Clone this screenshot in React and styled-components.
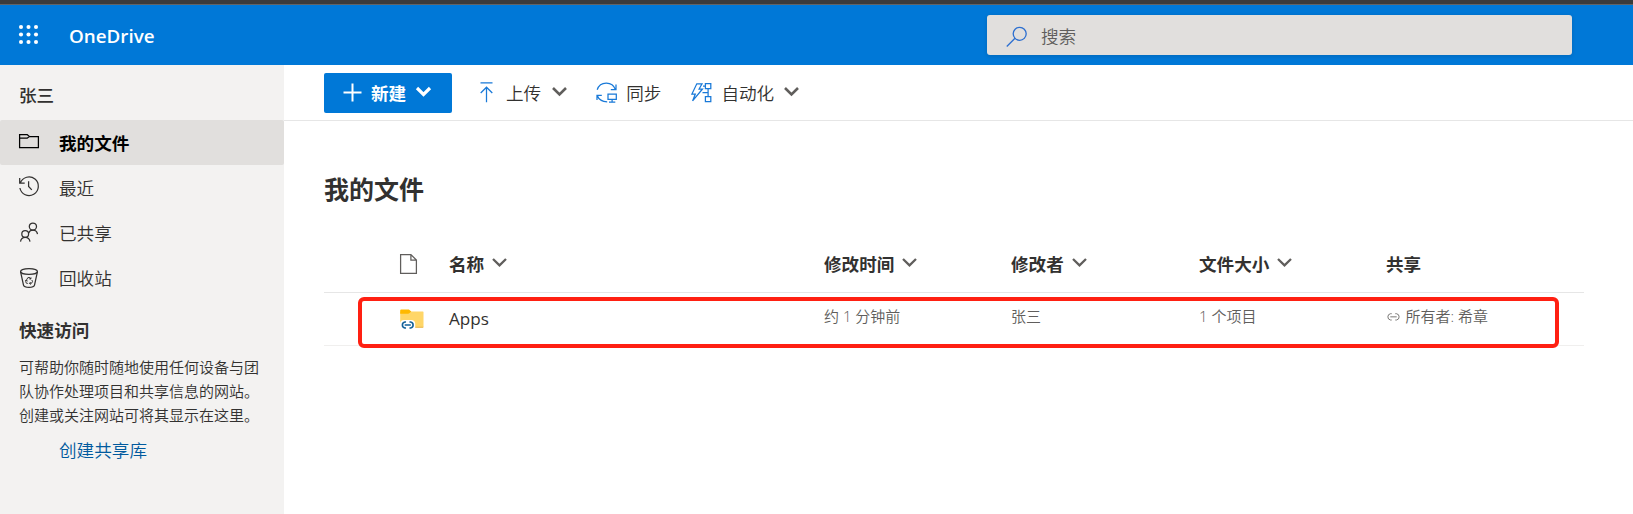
import React from "react";
import styled, { createGlobalStyle, css } from "styled-components";

const GlobalStyle = createGlobalStyle`
  * { box-sizing: border-box; }
  body {
    margin: 0;
    background: #fff;
    color: #323130;
    font-family: "Open Sans", "Noto Sans CJK SC", sans-serif;
    font-size: 17.6px;
    overflow: hidden;
  }
  svg { display: block; flex: none; overflow: visible; }
`;

const Page = styled.div`
  height: 514px;
  display: flex;
  flex-direction: column;
`;

const BrowserEdge = styled.div`
  height: 5px;
  flex: none;
  background: #3b3b3b;
  border-bottom: 1px solid #626466;
`;

const Header = styled.header`
  height: 60px;
  flex: none;
  display: flex;
  align-items: center;
  justify-content: space-between;
  padding: 0 61px 0 19px;
  background: #0078d7;
`;

const Brand = styled.div`
  display: flex;
  align-items: center;
  gap: 31px;
  color: #fff;
  font-size: 18.8px;
  font-weight: 600;
  line-height: 26px;
`;

const BrandName = styled.span`
  padding-top: 2px;
`;

const SearchBox = styled.div`
  width: 585px;
  height: 40px;
  display: flex;
  align-items: center;
  gap: 13px;
  padding-left: 19px;
  border-radius: 3px;
  background: #e1dfdd;
  color: #605e5c;
  font-weight: 350;
  box-shadow: 0 1px 4px rgba(0, 0, 0, 0.14);
`;

const Body = styled.div`
  flex: 1;
  min-height: 0;
  display: flex;
`;

const Sidebar = styled.aside`
  width: 284px;
  flex: none;
  background: #f3f2f1;
`;

const SideHeading = styled.h2`
  margin: 0;
  padding-left: 19px;
  height: ${(p) => p.$height}px;
  line-height: ${(p) => p.$line}px;
  font-size: 17.6px;
  font-weight: ${(p) => p.$weight || 700};
`;

const NavItem = styled.a`
  height: 45px;
  display: flex;
  align-items: center;
  gap: 20px;
  padding-left: 19px;
  font-weight: 350;
  line-height: 24px;
  svg { margin-bottom: ${(p) => p.$lift}px; }
  ${(p) =>
    p.$active &&
    css`
      background: #e1dfdd;
      border-radius: 2px;
      color: #000;
      font-weight: 700;
    `}
`;

const SideNote = styled.p`
  margin: 0;
  padding: 0 19px;
  width: 284px;
  font-size: 15px;
  font-weight: 350;
  line-height: 24px;
  white-space: nowrap;
`;

const SideLink = styled.a`
  display: block;
  padding: 11px 0 0 59px;
  color: #005a9e;
  font-weight: 350;
  line-height: 24px;
`;

const Main = styled.main`
  flex: 1;
  min-width: 0;
`;

const CommandBar = styled.div`
  height: 56px;
  display: flex;
  align-items: center;
  padding: 0 0 0 40px;
  border-bottom: 1px solid #e6e6e6;
`;

const PrimaryButton = styled.button`
  width: 128px;
  height: 40px;
  display: flex;
  align-items: center;
  gap: 9px;
  padding: 0 0 0 19px;
  border: 0;
  border-radius: 2px;
  background: #0078d7;
  color: #fff;
  font: inherit;
  font-weight: 700;
`;

const Command = styled.button`
  display: flex;
  align-items: center;
  gap: ${(p) => p.$gap}px;
  height: 40px;
  margin-left: ${(p) => p.$before}px;
  padding: 0;
  border: 0;
  background: none;
  color: inherit;
  font: inherit;
  font-weight: 350;
  white-space: nowrap;
`;

const PageTitle = styled.h1`
  margin: 0;
  padding: 48px 0 0 40px;
  font-size: 25px;
  font-weight: 700;
  line-height: 40px;
`;

const FileList = styled.div`
  position: relative;
  width: 1260px;
  margin: 29px 0 0 40px;
`;

const Row = styled.div`
  display: grid;
  grid-template-columns: 125px 375px 187px 188px 187px 1fr;
  align-items: center;
`;

const ListHeader = styled(Row)`
  height: 55px;
  padding-bottom: 3px;
  border-bottom: 1px solid #e6e6e6;
  font-weight: 700;
`;

const FileRow = styled(Row)`
  height: 53px;
  border-bottom: 1px solid #f0efee;
  color: #605e5c;
  font-size: 15px;
  font-weight: 350;
`;

const Cell = styled.div`
  display: flex;
  align-items: center;
  gap: ${(p) => p.$gap || 8}px;
  white-space: nowrap;
`;

const IconCell = styled.div`
  padding-left: 76px;
`;

const MetaCell = styled(Cell)`
  padding-bottom: 7px;
`;

const FileName = styled(Cell)`
  padding-bottom: 2px;
  color: #323130;
  font-size: 17.1px;
  font-weight: 400;
`;

const Highlight = styled.div`
  position: absolute;
  left: 34px;
  top: 59px;
  width: 1201px;
  height: 51px;
  border: 4px solid #ff2012;
  border-radius: 6px;
`;

const ChevronSvg = styled.svg`
  margin-bottom: ${(p) => p.$lift}px;
`;

const Chevron = ({ color = "#605e5c", width = 2.3, lift = 2 }) => (
  <ChevronSvg $lift={lift} width="15" height="9" viewBox="0 0 15 9" fill="none" stroke={color} strokeWidth={width}>
    <path d="M1 1l6.5 6.4L14 1" />
  </ChevronSvg>
);

const Waffle = () => (
  <svg width="19" height="19" viewBox="0 0 19 19" fill="#fff">
    {[1, 8.5, 16].map((y) => [2, 9.5, 17].map((x) => <circle key={`${x}-${y}`} cx={x} cy={y} r="2.05" />))}
  </svg>
);

const SearchIcon = () => (
  <svg width="22" height="20" viewBox="0 0 22 20" fill="none" stroke="#2c6fd0" strokeWidth="1.3">
    <circle cx="13.7" cy="8.8" r="6.5" />
    <path d="M9 13.3L.8 21.5" />
  </svg>
);

const Line = ({ w = 20, h = 20, color = "currentColor", stroke = 1.25, children }) => (
  <svg width={w} height={h} viewBox={`0 0 ${w} ${h}`} fill="none" stroke={color} strokeWidth={stroke}>
    {children}
  </svg>
);

const FolderOutline = () => (
  <Line h={16}>
    <path d="M.6 14.5V1.5H8.2l2.1 2h9.1v11H.6zM.6 5.2H8.2l2.1-1.7" />
  </Line>
);

const History = () => (
  <Line>
    <path d="M1.3 7A9.3 9.3 0 1 1 .9 12M.7 2v5.1h5M9.6 5.2v5.3l3.2 3.4" />
  </Line>
);

const People = () => (
  <Line>
    <circle cx="13.9" cy="4.6" r="3.6" />
    <circle cx="6.2" cy="12" r="3.4" />
    <path d="M1.5 19.6c.4-2.5 2.2-4.2 4.7-4.2s4.4 1.7 4.8 4.2M9.7 10.9c.7-1.7 2.1-2.7 4.2-2.7 2.6 0 4.2 1.6 4.6 4" />
  </Line>
);

const RecycleBin = () => (
  <Line>
    <ellipse cx="10" cy="3.5" rx="8.4" ry="2.9" />
    <path d="M1.6 3.8l2.9 13.3c.4 1.6 2.1 2.3 5.5 2.3s5.1-.7 5.5-2.3L18.4 3.8" />
    <path d="M7.6 11.8l1.3-2.2h2l.9 1.4M12.9 12l.6 1.6-1 1.7h-1.9M8.8 15.4l-1.3-.1-.8-1.5.7-1.6M12 9.4l-.2 1.7-1.6-.3M11.6 14.1l-1.2 1.3 1.2 1.2M6.2 12.6l1.4-.6.7 1.4" strokeWidth="1" />
  </Line>
);

const Plus = () => (
  <Line w={19} h={19} color="#fff" stroke={2}>
    <path d="M9.5 .5v18M.5 9.5h18" />
  </Line>
);

const Upload = () => (
  <Line w={13} h={21} color="#1979d8">
    <path d="M.5 .9h12M6.5 20.2V5.2M.7 11L6.5 5.2l5.8 5.8" />
  </Line>
);

const Sync = () => (
  <Line w={21} h={21} color="#1979d8">
    <path d="M1.2 7.7a9.6 9.6 0 0 1 18.2-.2M20 2.6v5.1h-5.2M1 18v-4.7h4.8M1.2 13.6c1.5 3.8 5 6.2 10 6.2" />
    <path d="M12 12h8.3v5.3H12zM16.1 17.3v2.5M13 20h6.3" />
  </Line>
);

const Automate = () => (
  <Line w={21} h={20} color="#1979d8">
    <path d="M5.8.8h5.2L8.1 6h3.4L1.6 17.9 4.3 11H.9z" />
    <path d="M14.4.7h5.4v5h-5.4zM14.4 13.6h5.4v5h-5.4zM17.1 5.7v7.9M14.4 3.2H12M17.1 9.6h-5.6" />
  </Line>
);

const FileIcon = () => (
  <Line w={17} h={20} color="#605e5c">
    <path d="M.6.6h10.3l5.5 5.5v13.3H.6zM10.9.6v5.5h5.5" />
  </Line>
);

const LinkShape = () => <path d="M5.2 7H4a3.2 3.2 0 0 1 0-6.3h1.2M8.8.7H10A3.2 3.2 0 0 1 10 7H8.8M3.8 3.85h6.4" />;

const SharedFolder = () => (
  <svg width="24" height="20" viewBox="0 0 24 20">
    <path d="M.2 2.4h22.7c.4 0 .6.3.6.7v14.5c0 .6-.4 1-1 1H1.2c-.5 0-1-.4-1-.9z" fill="#ffd668" />
    <path d="M15 17.7h8.5c0 .6-.4 1-1 1H15z" fill="#e9b64e" />
    <path d="M.2 1.3C.2.8.6.5 1.1.5h7.2c.5 0 .8.1 1.2.4l1.8 1.6-2 1.8c-.3.3-.7.4-1.1.4h-8z" fill="#ffb900" />
    <path d="M0 14.8c0-2 1.7-3.7 3.7-3.7h7.8c2.1 0 3.7 1.7 3.7 3.7v5.1H0z" fill="#fff" />
    <g transform="translate(1.1 12.4) scale(.95)" fill="none" stroke="#126199" strokeWidth="1.7">
      <LinkShape />
    </g>
  </svg>
);

const ShareLink = () => (
  <svg width="15" height="8" viewBox="0 -1 14 8" fill="none" stroke="#797775" strokeWidth="1">
    <LinkShape />
  </svg>
);

const navItems = [
  { label: "我的文件", Icon: FolderOutline, active: true, lift: 3 },
  { label: "最近", Icon: History, lift: 4 },
  { label: "已共享", Icon: People, lift: 1 },
  { label: "回收站", Icon: RecycleBin, lift: 0 },
];

const columns = ["名称", "修改时间", "修改者", "文件大小"];

export default function App() {
  return (
    <Page>
      <GlobalStyle />
      <BrowserEdge />
      <Header>
        <Brand>
          <Waffle />
          <BrandName>OneDrive</BrandName>
        </Brand>
        <SearchBox>
          <SearchIcon />
          搜索
        </SearchBox>
      </Header>
      <Body>
        <Sidebar>
          <SideHeading $height={55} $line={61} $weight={500}>张三</SideHeading>
          <nav>
            {navItems.map(({ label, Icon, active, lift }) => (
              <NavItem key={label} $active={active} $lift={lift}>
                <Icon />
                {label}
              </NavItem>
            ))}
          </nav>
          <SideHeading $height={55} $line={61}>快速访问</SideHeading>
          <SideNote>
            可帮助你随时随地使用任何设备与团
            <br />
            队协作处理项目和共享信息的网站。
            <br />
            创建或关注网站可将其显示在这里。
          </SideNote>
          <SideLink>创建共享库</SideLink>
        </Sidebar>
        <Main>
          <CommandBar>
            <PrimaryButton>
              <Plus />
              <Cell $gap={10}>新建 <Chevron color="#fff" width={3.2} /></Cell>
            </PrimaryButton>
            <Command $before={28} $gap={13}>
              <Upload />
              <Cell $gap={11}>上传 <Chevron width={2.6} /></Cell>
            </Command>
            <Command $before={29} $gap={9}>
              <Sync />
              同步
            </Command>
            <Command $before={30} $gap={9}>
              <Automate />
              <Cell $gap={10}>自动化 <Chevron width={2.6} /></Cell>
            </Command>
          </CommandBar>
          <PageTitle>我的文件</PageTitle>
          <FileList>
            <ListHeader>
              <IconCell>
                <FileIcon />
              </IconCell>
              {columns.map((label) => (
                <Cell key={label}>
                  {label}
                  <Chevron />
                </Cell>
              ))}
              <Cell>共享</Cell>
            </ListHeader>
            <FileRow>
              <IconCell>
                <SharedFolder />
              </IconCell>
              <FileName>Apps</FileName>
              <MetaCell>约 1 分钟前</MetaCell>
              <MetaCell>张三</MetaCell>
              <MetaCell>1 个项目</MetaCell>
              <MetaCell $gap={4.5}>
                <ShareLink />
                所有者: 希章
              </MetaCell>
            </FileRow>
            <Highlight />
          </FileList>
        </Main>
      </Body>
    </Page>
  );
}
